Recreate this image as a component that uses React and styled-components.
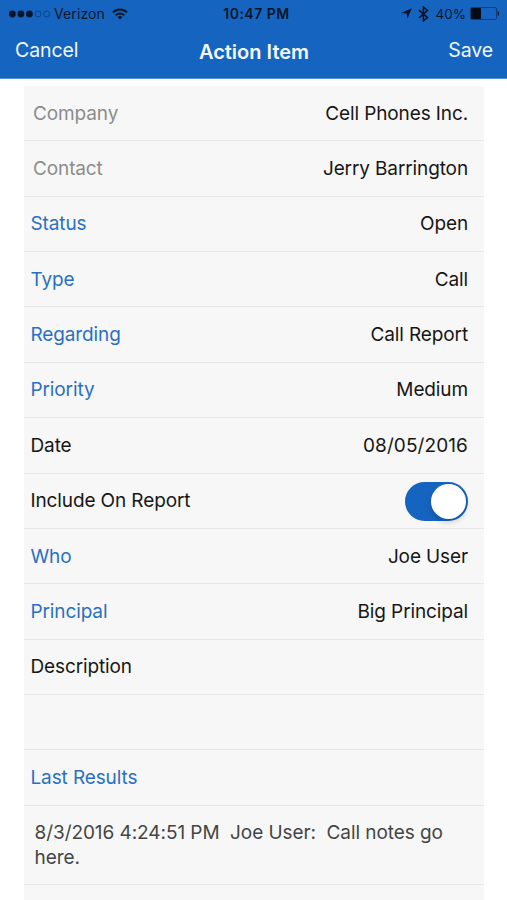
import React, { useState } from 'react';
import styled, { createGlobalStyle } from 'styled-components';

const GlobalStyle = createGlobalStyle`
  * {
    box-sizing: border-box;
  }

  body {
    margin: 0;
    background: #ffffff;
    font-family: Inter, 'Liberation Sans', sans-serif;
    overflow: hidden;
  }
`;

const Screen = styled.div`
  width: 507px;
  height: 900px;
  overflow: hidden;
  background: #ffffff;
`;

const Header = styled.header`
  height: 79px;
  background: #1565c0;
  border-bottom: 1px solid #5592d6;
`;

const StatusBar = styled.div`
  display: grid;
  grid-template-columns: 1fr auto 1fr;
  align-items: center;
  height: 27px;
  padding: 0 7px 0 9px;
  color: #07152b;
  font-size: 13.5px;
`;

const StatusGroup = styled.div`
  display: flex;
  align-items: center;
  justify-content: ${props => (props.$end ? 'flex-end' : 'flex-start')};

  svg {
    display: block;
  }
`;

const IconGroup = styled.div`
  display: flex;
  align-items: center;
  gap: 6px;
`;

const Carrier = styled.span`
  margin: 0 7px 0 4px;
  font-size: 14px;
  letter-spacing: 0.1px;
`;

const Clock = styled.span`
  margin-left: 4px;
  font-weight: 600;
  font-size: 14px;
  letter-spacing: 0.5px;
`;

const Percent = styled.span`
  margin: 0 4px 0 7px;
`;

const NavBar = styled.nav`
  display: grid;
  grid-template-columns: 1fr auto 1fr;
  align-items: center;
  height: 46px;
  padding: 0 14px 0 15px;
`;

const NavButton = styled.button`
  justify-self: ${props => (props.$end ? 'end' : 'start')};
  padding: 0;
  border: 0;
  background: none;
  color: #f1f6fc;
  font-family: inherit;
  font-size: 19.5px;
  line-height: 24px;
  letter-spacing: -0.1px;
  cursor: pointer;
`;

const Title = styled.h1`
  margin: 4px 0 0;
  color: #f4f8fd;
  font-size: 20px;
  font-weight: 600;
  line-height: 24px;
`;

const Form = styled.main`
  width: 460px;
  height: 814px;
  margin: 7px 0 0 24px;
  background: #f7f7f7;
`;

const Row = styled.div`
  display: flex;
  align-items: center;
  justify-content: space-between;
  height: 55.36px;
  padding: 0 16px 0 ${props => (props.$readOnly ? 9 : 6.5)}px;
  border-bottom: 1px solid #e6e6e7;
`;

const labelColors = {
  muted: '#8c8c8c',
  link: '#2a70c2',
  plain: '#161616',
};

const Label = styled.span`
  color: ${props => labelColors[props.$tone]};
  font-size: 19px;
  letter-spacing: -0.12px;
`;

const Value = styled.span`
  color: #161616;
  font-size: 19px;
  letter-spacing: ${props => (props.$numeric ? 0.1 : -0.12)}px;
`;

const Toggle = styled.button`
  display: flex;
  align-items: center;
  justify-content: ${props => (props.$on ? 'flex-end' : 'flex-start')};
  width: 63px;
  height: 39px;
  margin-top: 1px;
  padding: 0 2px;
  border: 0;
  border-radius: 20px;
  background: ${props => (props.$on ? '#1565c0' : '#e5e5e5')};
  cursor: pointer;
`;

const Knob = styled.span`
  width: 35px;
  height: 35px;
  border-radius: 50%;
  background: #ffffff;
  box-shadow: 0 3px 6px rgba(0, 0, 0, 0.18);
`;

const Notes = styled.p`
  height: 79.4px;
  margin: 0;
  padding: 15.5px 24px 0 10.5px;
  border-bottom: 1px solid #e6e6e7;
  color: #454545;
  font-size: 19px;
  line-height: 24.5px;
  letter-spacing: -0.07px;
  white-space: pre-wrap;
`;

const SignalDots = () => (
  <svg width="41" height="8" viewBox="0 0 41 8">
    {[3.4, 11.9, 20.4].map(cx => (
      <circle key={cx} cx={cx} cy="4" r="3.4" fill="#07152b" />
    ))}
    {[29, 37.5].map(cx => (
      <circle key={cx} cx={cx} cy="4" r="3" fill="none" stroke="#0d3c78" strokeWidth="0.8" />
    ))}
  </svg>
);

const WifiIcon = () => (
  <svg width="16" height="12" viewBox="0 0 16 12" fill="none" stroke="#07152b" strokeWidth="2">
    <path d="M1 4.4C4.9.5 11.1.5 15 4.4" />
    <path d="M3.7 7.2c2.4-2.4 6.2-2.4 8.6 0" />
    <path d="M8 11.6 5.4 9c1.5-1.4 3.7-1.4 5.2 0z" fill="#07152b" stroke="none" />
  </svg>
);

const LocationIcon = () => (
  <svg width="11" height="11" viewBox="0 0 11 11">
    <path d="M10.8.3 6.4 10.7 5.7 5.5.3 5z" fill="#07152b" />
  </svg>
);

const BluetoothIcon = () => (
  <svg width="11" height="16" viewBox="0 0 11 16" fill="none" stroke="#07152b" strokeWidth="1.6">
    <path d="M1 4.2 9.5 11.6 5.4 14.9V1.1L9.5 4.4 1 11.8" />
  </svg>
);

const BatteryIcon = () => (
  <svg width="30" height="13" viewBox="0 0 30 13">
    <rect x="0.5" y="0.5" width="26" height="12" rx="1.5" fill="none" stroke="#0c3468" strokeWidth="0.8" />
    <rect x="1" y="1" width="10" height="11" rx="0.8" fill="#020b18" />
    <path d="M27.6 4c2 .6 2 4.4 0 5z" fill="#07152b" />
  </svg>
);

const fields = [
  { label: 'Company', value: 'Cell Phones Inc.', tone: 'muted' },
  { label: 'Contact', value: 'Jerry Barrington', tone: 'muted' },
  { label: 'Status', value: 'Open', tone: 'link' },
  { label: 'Type', value: 'Call', tone: 'link' },
  { label: 'Regarding', value: 'Call Report', tone: 'link' },
  { label: 'Priority', value: 'Medium', tone: 'link' },
  { label: 'Date', value: '08/05/2016', tone: 'plain', numeric: true },
  { label: 'Include On Report', toggle: true, tone: 'plain' },
  { label: 'Who', value: 'Joe User', tone: 'link' },
  { label: 'Principal', value: 'Big Principal', tone: 'link' },
  { label: 'Description', tone: 'plain' },
  { label: '', tone: 'plain' },
  { label: 'Last Results', tone: 'link' },
];

const App = () => {
  const [includeOnReport, setIncludeOnReport] = useState(true);

  return (
    <>
      <GlobalStyle />
      <Screen>
        <Header>
          <StatusBar>
            <StatusGroup>
              <SignalDots />
              <Carrier>Verizon</Carrier>
              <WifiIcon />
            </StatusGroup>
            <Clock>10:47 PM</Clock>
            <StatusGroup $end>
              <IconGroup>
                <LocationIcon />
                <BluetoothIcon />
              </IconGroup>
              <Percent>40%</Percent>
              <BatteryIcon />
            </StatusGroup>
          </StatusBar>
          <NavBar>
            <NavButton>Cancel</NavButton>
            <Title>Action Item</Title>
            <NavButton $end>Save</NavButton>
          </NavBar>
        </Header>

        <Form>
          {fields.map((field, index) => (
            <Row key={index} $readOnly={field.tone === 'muted'}>
              <Label $tone={field.tone}>{field.label}</Label>
              {field.value && <Value $numeric={field.numeric}>{field.value}</Value>}
              {field.toggle && (
                <Toggle
                  role="switch"
                  aria-checked={includeOnReport}
                  $on={includeOnReport}
                  onClick={() => setIncludeOnReport(!includeOnReport)}
                >
                  <Knob />
                </Toggle>
              )}
            </Row>
          ))}
          <Notes>{'8/3/2016 4:24:51 PM  Joe User:  Call notes go here.'}</Notes>
        </Form>
      </Screen>
    </>
  );
};

export default App;
